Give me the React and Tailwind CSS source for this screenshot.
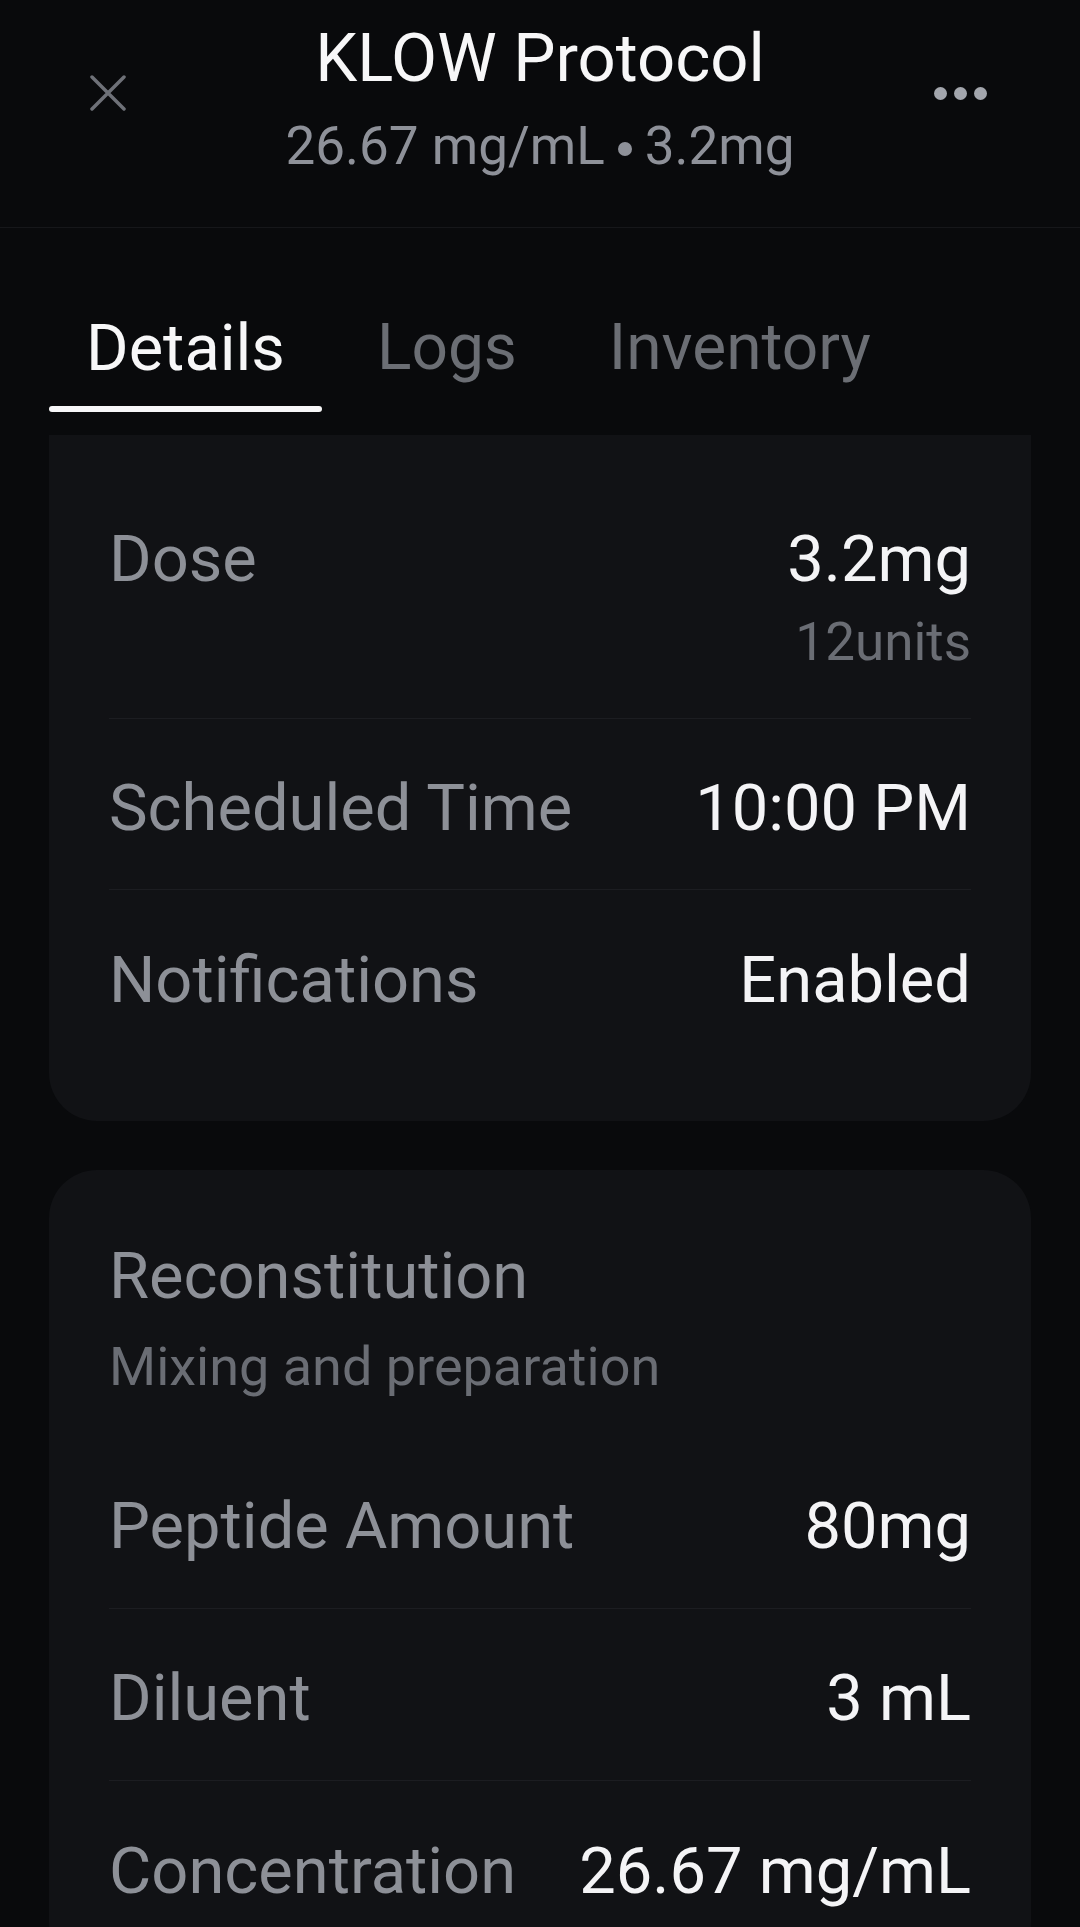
import React from 'react';

const Row = ({ label, value, sub, last, className = '' }) => (
    <div className={`${last ? '' : 'border-b border-[#1c1d21]'} ${className}`}>
        <div className="flex items-start justify-between">
            <span className="text-[65px] leading-[78px] text-[#8d9097]">{label}</span>
            <div className="flex flex-col items-end">
                <span className="text-[65px] leading-[78px] text-[#f4f4f6]">{value}</span>
                {sub && <span className="mt-[12px] text-[53px] leading-[64px] text-[#6a6d74]">{sub}</span>}
            </div>
        </div>
    </div>
);

const App = () => {
    return (
        <div className="min-h-screen bg-[#090a0c] font-[Roboto,sans-serif] overflow-hidden">
            {/* Header */}
            <div className="grid grid-cols-[1fr_auto_1fr] items-center px-[90px] pt-[18px] pb-[49px] border-b border-[#16171a]">
                <div className="flex justify-start mb-[10px]">
                    <svg width="36" height="36" viewBox="0 0 36 36" fill="none">
                        <path d="M2 2L34 34M34 2L2 34" stroke="#6e7178" strokeWidth="3.5" strokeLinecap="round" />
                    </svg>
                </div>
                <div className="flex flex-col items-center">
                    <h1 className="text-[67px] leading-[80px] text-[#f7f7f8]">KLOW Protocol</h1>
                    <p className="mt-[16px] flex items-center text-[53px] leading-[64px] text-[#8e9199]">
                        26.67 mg/mL
                        <span className="mx-[13px] mt-[6px] inline-block w-[14px] h-[14px] rounded-full bg-[#8e9199]"></span>
                        3.2mg
                    </p>
                </div>
                <div className="flex justify-end gap-[7px] mb-[10px] mr-[3px]">
                    <span className="w-[13px] h-[13px] rounded-full bg-[#a3a6ad]"></span>
                    <span className="w-[13px] h-[13px] rounded-full bg-[#a3a6ad]"></span>
                    <span className="w-[13px] h-[13px] rounded-full bg-[#a3a6ad]"></span>
                </div>
            </div>

            {/* Tabs */}
            <div className="flex gap-[18px] px-[49px] pt-[81px]">
                <div className="flex flex-col items-center">
                    <span className="px-[37px] text-[65px] leading-[78px] text-[#f7f7f8]">Details</span>
                    <span className="mt-[19px] h-[6px] w-full rounded-full bg-[#f7f7f8]"></span>
                </div>
                <span className="px-[37px] text-[64px] leading-[78px] text-[#6b6e74]">Logs</span>
                <span className="px-[37px] text-[64px] leading-[78px] text-[#6b6e74]">Inventory</span>
            </div>

            {/* Schedule card */}
            <div className="mx-[49px] mt-[23px] rounded-b-[48px] bg-[#111215] px-[60px] pt-[85px] pb-[102px]">
                <Row label="Dose" value="3.2mg" sub="12units" className="pb-[44px]" />
                <Row label="Scheduled Time" value="10:00 PM" className="pt-[50px] pb-[42px]" />
                <Row label="Notifications" value="Enabled" last className="pt-[51px]" />
            </div>

            {/* Reconstitution card */}
            <div className="mx-[49px] mt-[49px] rounded-[48px] bg-[#111215] px-[60px] pt-[67px] pb-[60px]">
                <h2 className="text-[65px] leading-[78px] text-[#8d9097]">Reconstitution</h2>
                <p className="mt-[20px] text-[54px] leading-[64px] text-[#6a6d74]">Mixing and preparation</p>
                <Row label="Peptide Amount" value="80mg" className="mt-[88px] pb-[43px]" />
                <Row label="Diluent" value="3 mL" className="pt-[50px] pb-[43px]" />
                <Row label="Concentration" value="26.67 mg/mL" last className="pt-[51px]" />
            </div>
        </div>
    );
};

export default App;
